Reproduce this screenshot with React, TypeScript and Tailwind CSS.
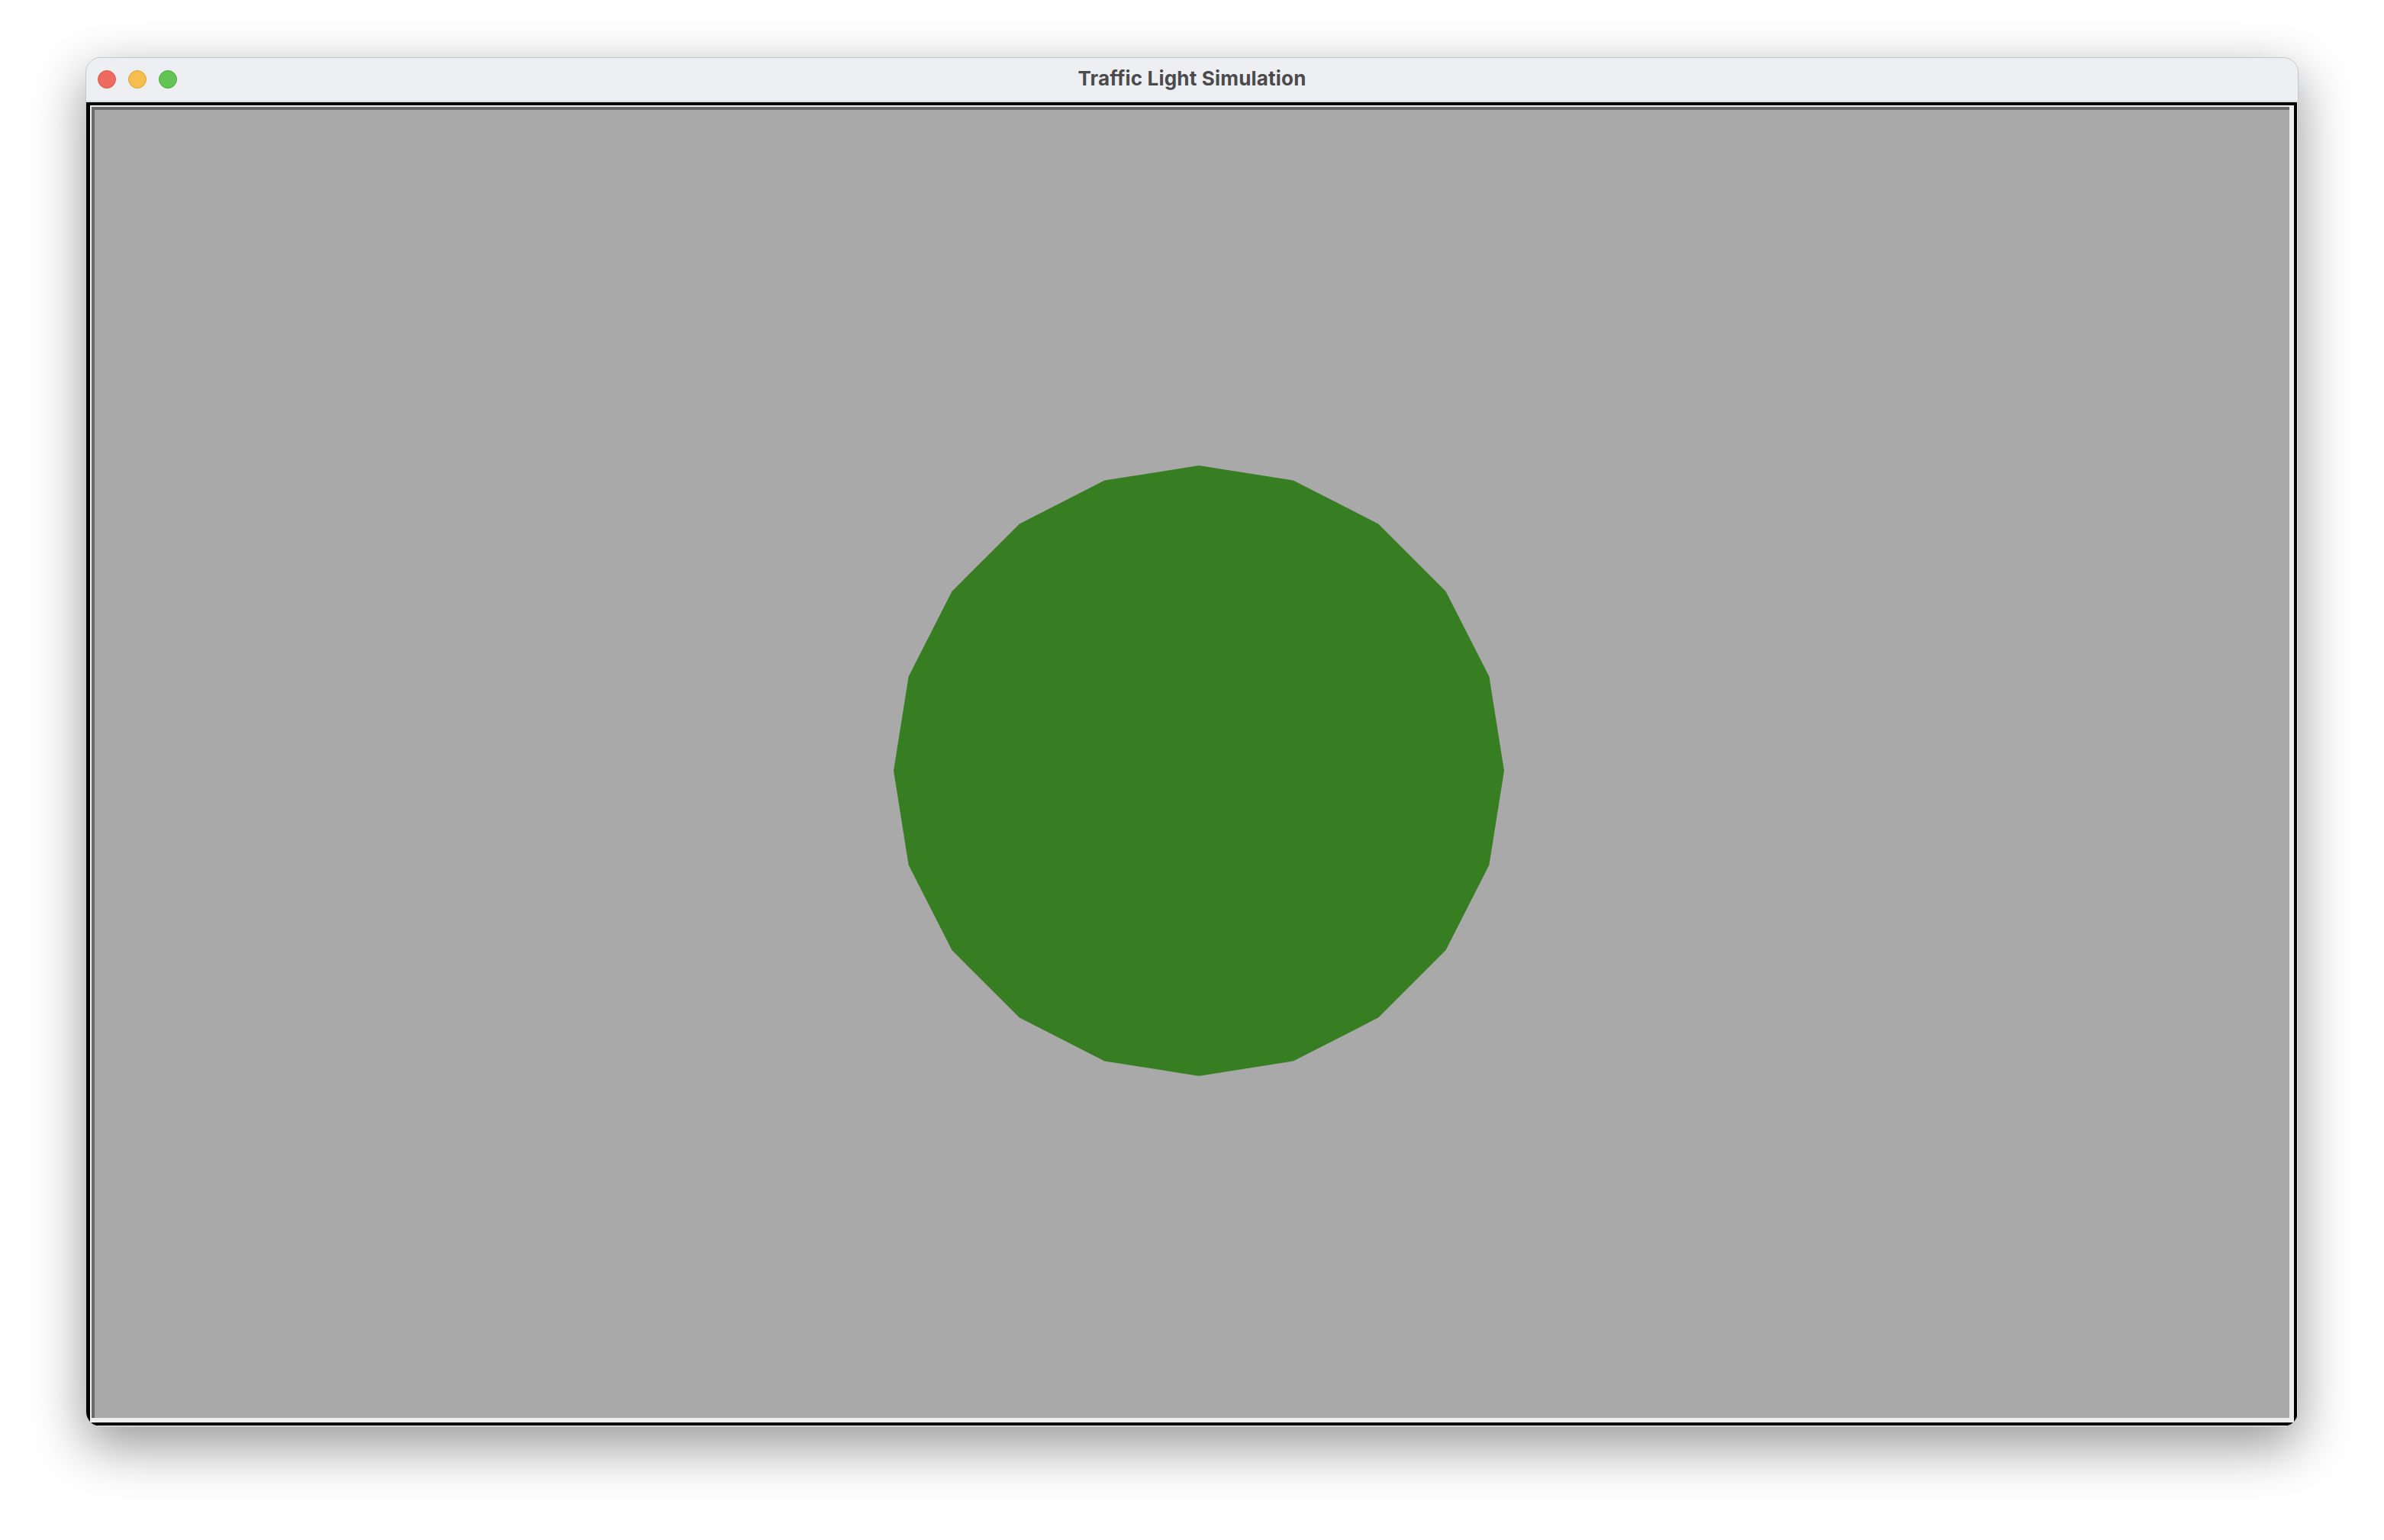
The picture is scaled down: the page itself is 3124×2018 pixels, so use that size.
const polygonPoints = (cx: number, cy: number, r: number, n: number) =>
  Array.from({ length: n }, (_, i) => {
    const a = (i * 2 * Math.PI) / n
    return `${(cx + r * Math.sin(a)).toFixed(1)},${(cy - r * Math.cos(a)).toFixed(1)}`
  }).join(' ')

const TrafficLights = () => (
  <div className="flex items-center gap-[16px] pl-[15px]">
    <span className="h-[24px] w-[24px] rounded-full border border-[#d65a4f] bg-[#ee6a5f]" />
    <span className="h-[24px] w-[24px] rounded-full border border-[#d9a441] bg-[#f5bf4f]" />
    <span className="h-[24px] w-[24px] rounded-full border border-[#4fa93f] bg-[#61c454]" />
  </div>
)

export default function App() {
  return (
    <div className="flex h-[2018px] w-[3124px] justify-center bg-white pt-[75px]">
      <div className="flex h-[1795px] w-[2900px] flex-col overflow-hidden rounded-[20px] border border-[#c6c6c8] bg-[#eeeef1] shadow-[0_24px_70px_rgba(0,0,0,0.42)]">
        <header className="grid h-[57px] shrink-0 grid-cols-[1fr_auto_1fr] items-center border-b border-[#d4d4d6] bg-[#eeeff2]">
          <TrafficLights />
          <h1 className="-mt-[3px] text-[26px] font-bold tracking-[0.2px] text-[#4b4b4d] [font-family:Inter,'Noto_Sans',sans-serif]">
            Traffic Light Simulation
          </h1>
          <div />
        </header>

        <main className="flex flex-1 flex-col bg-[#ededed] pt-[1px] pr-[1px] pb-[1px]">
          <div className="flex flex-1 border-t-4 border-r-4 border-b-4 border-l-[5px] border-black">
            <div className="flex flex-1 border-t-2 border-r-[6px] border-b-[6px] border-l-2 border-[#eeeeee]">
              <div className="flex flex-1 border-t-4 border-l-4 border-[#6a6a6a] bg-[#a9a9a9]">
                <svg className="h-full w-full" viewBox="0 0 2876 1714" preserveAspectRatio="none">
                  <polygon points={polygonPoints(1447, 866, 400, 20)} fill="#377d21" />
                </svg>
              </div>
            </div>
          </div>
        </main>
      </div>
    </div>
  )
}
